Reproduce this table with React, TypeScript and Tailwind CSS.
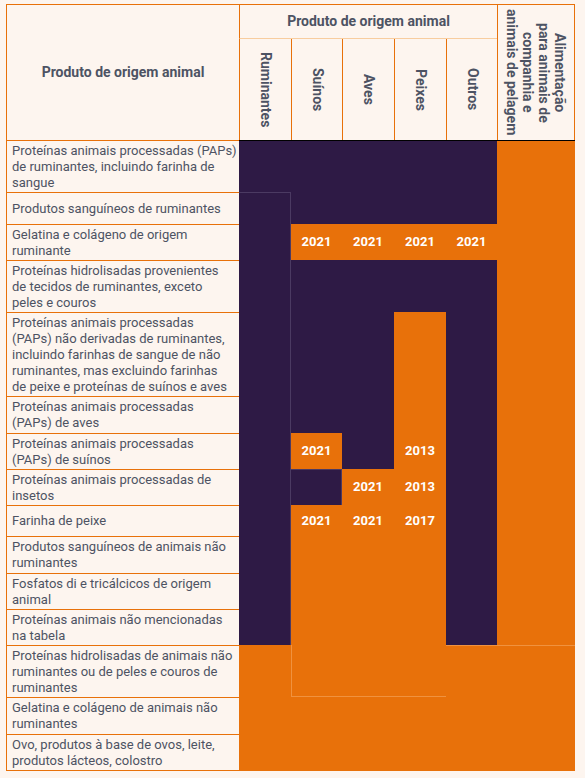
import React from "react";

type Row = { label: string[]; c: string; y?: string[] };

const rows: Row[] = [
  { label: ["Proteínas animais processadas (PAPs)", "de ruminantes, incluindo farinha de", "sangue"], c: "PPPPPO" },
  { label: ["Produtos sanguíneos de ruminantes"], c: "PPPPPO" },
  { label: ["Gelatina e colágeno de origem", "ruminante"], c: "POOOOO", y: ["", "2021", "2021", "2021", "2021", ""] },
  { label: ["Proteínas hidrolisadas provenientes", "de tecidos de ruminantes, exceto", "peles e couros"], c: "PPPPPO" },
  {
    label: [
      "Proteínas animais processadas",
      "(PAPs) não derivadas de ruminantes,",
      "incluindo farinhas de sangue de não",
      "ruminantes, mas excluindo farinhas",
      "de peixe e proteínas de suínos e aves",
    ],
    c: "PPPOPO",
  },
  { label: ["Proteínas animais processadas", "(PAPs) de aves"], c: "PPPOPO" },
  { label: ["Proteínas animais processadas", "(PAPs) de suínos"], c: "POPOPO", y: ["", "2021", "", "2013", "", ""] },
  { label: ["Proteínas animais processadas de", "insetos"], c: "PPOOPO", y: ["", "", "2021", "2013", "", ""] },
  { label: ["Farinha de peixe"], c: "POOOPO", y: ["", "2021", "2021", "2017", "", ""] },
  { label: ["Produtos sanguíneos de animais não", "ruminantes"], c: "POOOPO" },
  { label: ["Fosfatos di e tricálcicos de origem", "animal"], c: "POOOPO" },
  { label: ["Proteínas animais não mencionadas", "na tabela"], c: "POOOPO" },
  { label: ["Proteínas hidrolisadas de animais não", "ruminantes ou de peles e couros de", "ruminantes"], c: "OOOOOO" },
  { label: ["Gelatina e colágeno de animais não", "ruminantes"], c: "OOOOOO" },
  { label: ["Ovo, produtos à base de ovos, leite,", "produtos lácteos, colostro"], c: "OOOOOO" },
];

function extraFor(r: number, c: number): string {
  if (r === 0) return "border-t border-black";
  if (r === 1 && c === 0) return "border-t border-r border-[#4b3a62]";
  if (r >= 2 && r <= 11 && c === 0) return "border-r border-[#4b3a62]";
  if (r === 7 && c === 1) return "border-t border-r border-[#4b3a62]";
  if (r === 12 && c === 1) return "border-l border-b border-[#f0923f]";
  if (r === 12 && (c === 2 || c === 3)) return "border-b border-[#f0923f]";
  if (r === 12 && (c === 4 || c === 5)) return "border-t border-[#f0923f]";
  return "";
}

const subHeads = ["Ruminantes", "Suínos", "Aves", "Peixes", "Outros"];

export default function App() {
  return (
    <div className="w-[585px] h-[778px] bg-[#fdf5ef] pt-[4px] pl-[6px] font-['Roboto','Liberation_Sans',sans-serif]">
      <div className="grid w-[569px] grid-cols-[233px_52px_51px_52px_52px_51px_78px] grid-rows-[35px_101px_52px_32px_36px_52px_84px_37px_36px_36px_31px_37px_36px_36px_52px_37px_37px]">
        {/* header */}
        <div className="row-span-2 flex items-center justify-center border-l border-t border-[#e8710a] text-[14px] font-bold text-[#4d5363]">
          Produto de origem animal
        </div>
        <div className="col-span-5 flex items-center justify-center border-l border-t border-b border-l-[#e8710a] border-t-[#e8710a] border-b-[#f8cd9f] text-[14px] font-bold text-[#4d5363]">
          Produto de origem animal
        </div>
        <div className="row-span-2 flex items-center justify-center border-l border-t border-r border-[#e8710a] text-[14px] font-bold leading-[16px] text-[#4d5363]">
          <div className="[writing-mode:vertical-rl] text-center">
            Alimentação
            <br />
            para animais de
            <br />
            companhia e
            <br />
            animais de pelagem
          </div>
        </div>
        {subHeads.map((h) => (
          <div key={h} className="flex items-center justify-center border-l border-[#e8710a] text-[14px] font-bold text-[#4d5363]">
            <span className="[writing-mode:vertical-rl]">{h}</span>
          </div>
        ))}

        {/* body */}
        {rows.map((row, r) => (
          <React.Fragment key={r}>
            <div
              className={`flex items-center border-l border-t border-[#e8710a] px-[5px] text-[13px] leading-[16px] text-[#4d5363] whitespace-nowrap ${
                r === rows.length - 1 ? "border-b" : ""
              }`}
            >
              <div>
                {row.label.map((l, i) => (
                  <div key={i}>{l}</div>
                ))}
              </div>
            </div>
            {row.c.split("").map((ch, c) => (
              <div
                key={c}
                className={`flex items-center justify-center text-[13px] font-bold text-white ${
                  ch === "P" ? "bg-[#2e1a45]" : "bg-[#e8710a]"
                } ${extraFor(r, c)}`}
              >
                {row.y && row.y[c] ? row.y[c] : null}
              </div>
            ))}
          </React.Fragment>
        ))}
      </div>
    </div>
  );
}
